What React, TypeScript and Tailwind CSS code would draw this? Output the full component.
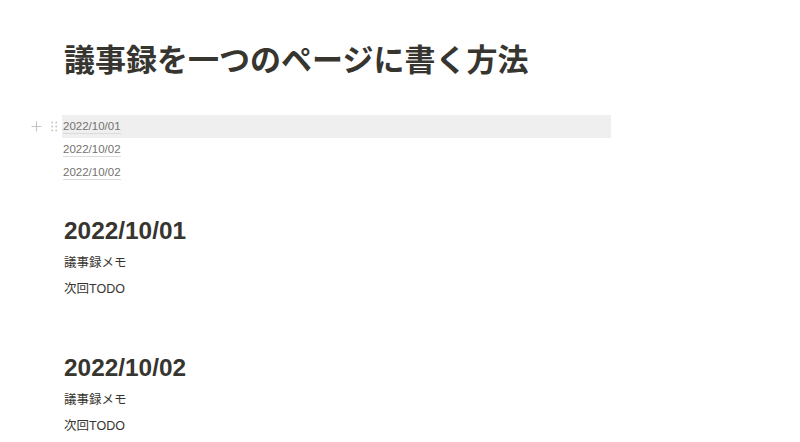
import React from "react";

const font = {
  fontFamily:
    '"Liberation Sans", "Noto Sans CJK JP", sans-serif',
};

const tocItems = [
  { id: 1, label: "2022/10/01", active: true },
  { id: 2, label: "2022/10/02", active: false },
  { id: 3, label: "2022/10/02", active: false },
];

const sections = [
  { id: 1, title: "2022/10/01", lines: ["議事録メモ", "次回TODO"] },
  { id: 2, title: "2022/10/02", lines: ["議事録メモ", "次回TODO"] },
];

function BlockHandle() {
  return (
    <div className="absolute left-[-31px] top-0 flex h-[23px] items-center gap-[9px]">
      {/* plus */}
      <svg width="11" height="11" viewBox="0 0 11 11" className="text-[#c4c3c0]">
        <path d="M5.5 0.5v10M0.5 5.5h10" stroke="currentColor" strokeWidth="1.1" fill="none" />
      </svg>
      {/* drag dots */}
      <svg width="7" height="11" viewBox="0 0 7 11" className="text-[#c4c3c0]">
        <circle cx="1.2" cy="1.5" r="0.9" fill="currentColor" />
        <circle cx="5.2" cy="1.5" r="0.9" fill="currentColor" />
        <circle cx="1.2" cy="5.5" r="0.9" fill="currentColor" />
        <circle cx="5.2" cy="5.5" r="0.9" fill="currentColor" />
        <circle cx="1.2" cy="9.5" r="0.9" fill="currentColor" />
        <circle cx="5.2" cy="9.5" r="0.9" fill="currentColor" />
      </svg>
    </div>
  );
}

export default function App() {
  return (
    <div className="min-h-[442px] w-[800px] bg-white text-[#37352f]" style={font}>
      <div className="pl-[64px] pt-[42px]">
        <h1 className="h-[37px] text-[31px] font-bold leading-[37px]">
          議事録を一つのページに書く方法
        </h1>

        {/* table of contents */}
        <div className="mt-[36px] flex w-[549px] flex-col -ml-[2px]">
          {tocItems.map((item) => (
            <div
              key={item.id}
              className={`relative flex h-[23px] items-center pl-[1px] ${
                item.active ? "bg-[#efefef]" : ""
              }`}
            >
              {item.active && <BlockHandle />}
              <span className="border-b border-[#dcdbd9] text-[11.5px] leading-[14px] text-[#73726e]">
                {item.label}
              </span>
            </div>
          ))}
        </div>

        {sections.map((section, i) => (
          <div key={section.id} className={i === 0 ? "mt-[31px]" : "mt-[50px]"}>
            <h2 className="h-[32px] text-[24.4px] font-semibold leading-[32px]">
              {section.title}
            </h2>
            <div className="mt-[3px]">
              {section.lines.map((line) => (
                <p key={line} className="h-[26px] text-[12.5px] leading-[26px]">
                  {line}
                </p>
              ))}
            </div>
          </div>
        ))}
      </div>
    </div>
  );
}
